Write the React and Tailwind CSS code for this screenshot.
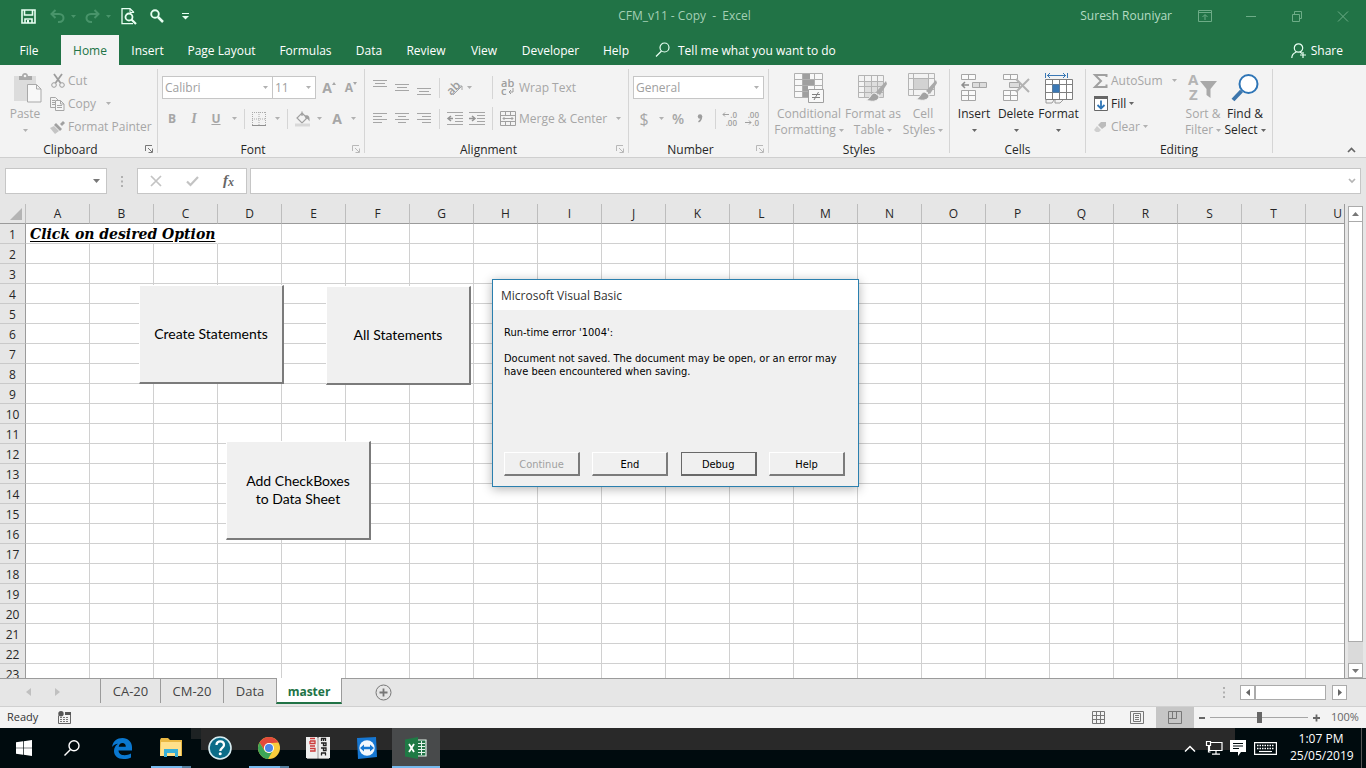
import React from "react";

const UI = "font-['Open_Sans','Noto_Sans',sans-serif]";

const Svg = ({ w, h, children, className = "", ...rest }) => (
  <svg width={w} height={h} viewBox={`0 0 ${w} ${h}`} fill="none" aria-hidden="true" className={`shrink-0 overflow-visible ${className}`} {...rest}>
    {children}
  </svg>
);

const Arrow = ({ className = "text-[#b1b1b1]" }) => (
  <Svg w={5} h={3} className={className}>
    <path d="M0 0h5L2.5 3z" fill="currentColor" />
  </Svg>
);

const Sep = ({ className = "h-[20px]" }) => <span className={`w-px shrink-0 bg-[#d5d5d5] ${className}`} />;

const IconButton = ({ label, children, className = "w-[22px]" }) => (
  <button type="button" aria-label={label} className={`flex h-[23px] shrink-0 items-center justify-center leading-4 text-[#a6a6a6] ${className}`}>
    {children}
  </button>
);

const Lines = ({ rows, h = 14 }) => (
  <Svg w={14} h={h}>
    {rows.map(([x, y, len]) => (
      <path key={y} d={`M${x} ${y + 0.5}h${len}`} stroke="#a6a6a6" />
    ))}
  </Svg>
);

function Group({ name, width, launcher, active, children }) {
  return (
    <>
      <section aria-label={name} className={`flex h-[88px] shrink-0 flex-col ${width}`}>
        <div className="h-[72px]">{children}</div>
        <div className="flex h-4 items-center">
          <h2 className="flex-1 pt-px text-center text-[12px] leading-4 text-[#262626]">{name}</h2>
          {launcher && (
            <button type="button" aria-label={`${name} settings`} className={`flex w-4 justify-center ${active ? "text-[#777]" : "text-[#b8b8b8]"}`}>
              <Svg w={8} h={8}>
                <path d="M.5 6V.5H7M3 3l4 4M7.5 3.500V7.500H3.500" stroke="currentColor" />
              </Svg>
            </button>
          )}
        </div>
      </section>
      <Sep className="h-[84px]" />
    </>
  );
}

function BigButton({ lines, width, enabled, children }) {
  return (
    <button type="button" className={`flex flex-col items-center whitespace-nowrap pt-1 text-[12px] leading-4 ${width} ${enabled ? "text-[#262626]" : "text-[#a6a6a6]"}`}>
      <span className="mb-[3px] flex h-[30px] items-center justify-center">{children}</span>
      <span>{lines[0]}</span>
      <span className="flex h-4 items-center gap-[3px]">
        {lines[1]}
        <Arrow className={enabled ? "text-[#666]" : "text-[#b1b1b1]"} />
      </span>
    </button>
  );
}

const RowButton = ({ icon, text, arrow, enabled, arrowGap = "ml-1" }) => (
  <button type="button" className={`flex h-[23px] items-center whitespace-nowrap text-[12px] leading-4 ${enabled ? "text-[#262626]" : "text-[#a6a6a6]"}`}>
    <span className="mr-[3px] flex w-[15px] justify-center">{icon}</span>
    {text}
    {arrow && (
      <span className={arrowGap}>
        <Arrow className={enabled ? "text-[#666]" : "text-[#b1b1b1]"} />
      </span>
    )}
  </button>
);

const Picker = ({ label, value, width }) => (
  <div className={`relative flex h-[23px] items-center border border-[#c6c6c6] bg-white ${width}`}>
    <select aria-label={label} className="h-full w-full appearance-none bg-transparent pl-[2px] text-[12px] leading-4 text-[#a0a0a0] outline-none">
      <option>{value}</option>
    </select>
    <span className="pointer-events-none absolute right-[4px]">
      <Arrow />
    </span>
  </div>
);

const Brush = ({ x = 0, y = 0 }) => (
  <g transform={`translate(${x} ${y})`}>
    <path d="M21 0l1 3-7 11-4-3z" fill="#a9a9a9" />
    <path d="M10 12l4 3c0 4-4 6-9 5-2 0-3-1-4-1 5-1 4-7 9-7z" fill="#a2a2a2" stroke="#f3f3f3" />
  </g>
);

const ribbonTabs = [
  ["File", "w-[58px] mr-[3px]"],
  ["Home", "w-[58px]"],
  ["Insert", "w-[57px]"],
  ["Page Layout", "w-[91px]"],
  ["Formulas", "w-[77px]"],
  ["Data", "w-[50px]"],
  ["Review", "w-[64px]"],
  ["View", "w-[52px]"],
  ["Developer", "w-[81px]"],
  ["Help", "w-[50px]"],
];

function TitleBar() {
  return (
    <header className="flex h-[35px] items-center pb-[3px] text-[12px] leading-4 text-[#a4d0b5]">
      <div className="flex flex-1 basis-0 items-center pl-[21px] text-white">
        <button type="button" aria-label="Save">
          <Svg w={15} h={15}>
            <path d="M1 1h13v13H1zM3.500 1v5h8V1M4 14v-4h7v4" stroke="#e8fff2" strokeWidth="1.6" />
            <path d="M6 11h2v3H6z" fill="#e8fff2" />
          </Svg>
        </button>
        <button type="button" aria-label="Undo" className="ml-[14px] flex items-center gap-[6px]">
          <Svg w={15} h={14}>
            <path d="M5.500 1L1.500 5l4 4M2 5h7c6 0 6 8 0 8H8" stroke="#48946a" strokeWidth="2" />
          </Svg>
          <Arrow className="text-[#48946a]" />
        </button>
        <button type="button" aria-label="Redo" className="ml-[9px] flex items-center gap-[6px]">
          <Svg w={15} h={14}>
            <path d="M9.500 1l4 4-4 4M13 5H6c-6 0-6 8 0 8h1" stroke="#48946a" strokeWidth="2" />
          </Svg>
          <Arrow className="text-[#48946a]" />
        </button>
        <button type="button" aria-label="Print preview" className="ml-[10px]">
          <Svg w={16} h={17}>
            <path d="M12.500 5V4L9 .700H1v15h11" stroke="#e8fff2" strokeWidth="1.3" />
            <path d="M9 1v3.500h3.500" stroke="#e8fff2" />
            <circle cx="8" cy="9" r="3.500" stroke="#e8fff2" strokeWidth="1.8" />
            <path d="M10.500 11.500L15 16" stroke="#e8fff2" strokeWidth="2.2" />
          </Svg>
        </button>
        <button type="button" aria-label="Find" className="ml-[13px]">
          <Svg w={14} h={14}>
            <circle cx="5" cy="5" r="3.800" stroke="#e8fff2" strokeWidth="1.9" />
            <path d="M8 8l5 5" stroke="#e8fff2" strokeWidth="2.5" />
          </Svg>
        </button>
        <button type="button" aria-label="Customize toolbar" className="ml-[18px]">
          <Svg w={7} h={7}>
            <path d="M0 .5h7" stroke="#e8fff2" />
            <path d="M0 3h7L3.500 6.500z" fill="#e8fff2" />
          </Svg>
        </button>
      </div>
      <h1 className="whitespace-pre">CFM_v11 - Copy  -  Excel</h1>
      <div className="flex flex-1 basis-0 items-center justify-end pr-[18px] text-[#6dac87]">
        <span className="mr-[26px] text-[#b4dcc3]">Suresh Rouniyar</span>
        <button type="button" aria-label="Ribbon display options">
          <Svg w={14} h={12}>
            <path d="M.5.500h13v11H.5zM.5 2.500h13M7 10V5M4.500 7L7 4.500 9.500 7" stroke="currentColor" />
          </Svg>
        </button>
        <button type="button" aria-label="Minimize" className="ml-[34px]">
          <Svg w={10} h={11}><path d="M0 5.500h10" stroke="currentColor" /></Svg>
        </button>
        <button type="button" aria-label="Restore" className="ml-[36px]">
          <Svg w={10} h={11}><path d="M.5 3.500h7v7h-7zM2.500 3V.500h7v7H8" stroke="currentColor" /></Svg>
        </button>
        <button type="button" aria-label="Close" className="ml-[36px]">
          <Svg w={10} h={11}><path d="M0 .500l10 10M10 .500L0 10.500" stroke="currentColor" /></Svg>
        </button>
      </div>
    </header>
  );
}

function RibbonTabs() {
  return (
    <nav aria-label="Ribbon" className="flex h-[30px] items-stretch whitespace-nowrap text-[12px] leading-4 text-white">
      {ribbonTabs.map(([name, width]) => (
        <button key={name} type="button" className={`shrink-0 pt-px ${width} ${name === "Home" ? "bg-[#f3f3f3] text-[#217346]" : ""}`}>
          {name}
        </button>
      ))}
      <button type="button" className="ml-[14px] flex items-center gap-2 pt-px">
        <Svg w={15} h={15} className="-mt-[2px]">
          <circle cx="9.500" cy="5.500" r="4.500" stroke="#e8fff2" strokeWidth="1.2" />
          <path d="M6.500 9L1 14.500" stroke="#e8fff2" strokeWidth="1.300" />
        </Svg>
        Tell me what you want to do
      </button>
      <button type="button" className="ml-auto mr-[23px] flex items-center gap-1 pt-px">
        <Svg w={16} h={16}>
          <circle cx="7.500" cy="5" r="4.200" stroke="#e8fff2" strokeWidth="1.200" />
          <path d="M.800 15c0-3 2-5 4.500-6M9 9l2 1.500M12 9v6M9 12h6" stroke="#e8fff2" strokeWidth="1.200" />
        </Svg>
        Share
      </button>
    </nav>
  );
}

function ClipboardGroup() {
  return (
    <Group name="Clipboard" width="w-[157px]" launcher active>
      <div className="flex">
        <BigButton lines={["Paste", ""]} width="w-[50px]">
          <Svg w={29} h={30} className="ml-1">
            <path d="M1 3h22v25H1z" fill="#dcdcdc" />
            <path d="M6 7V3h3c0-4 6-4 6 0h4v4z" fill="#a9a9a9" />
            <circle cx="12" cy="3" r="1.300" fill="#f3f3f3" />
            <path d="M14.500 11.500h9l4.500 4.500v13H14.500zM23.500 11.500V16H28" fill="#f8f8f8" stroke="#a9a9a9" />
          </Svg>
        </BigButton>
        <div className="flex flex-col">
          <RowButton
            text="Cut"
            icon={
              <Svg w={14} h={15}>
                <path d="M3 1l6.500 9M11 1L4.500 10" stroke="#9d9d9d" strokeWidth="1.800" />
                <circle cx="3" cy="12" r="2.300" stroke="#9d9d9d" />
                <circle cx="11" cy="12" r="2.300" stroke="#9d9d9d" />
              </Svg>
            }
          />
          <RowButton
            text="Copy"
            arrow
            arrowGap="ml-[10px]"
            icon={
              <Svg w={15} h={14}>
                <path d="M5 10.500H.500V.500h5L8 3M2 3.500h3M2 5.500h3M2 7.500h3" stroke="#a6a6a6" />
                <path d="M5.500 3.500h5L14 7v6.500H5.500zM10.500 3.500V7H14M7 8.500h5M7 10.500h5" fill="#f6f6f6" stroke="#a6a6a6" />
              </Svg>
            }
          />
          <RowButton
            text="Format Painter"
            icon={
              <Svg w={15} h={14}>
                <path d="M10 4l3-3 2 2-3 3z" fill="#a0a0a0" />
                <path d="M6 3l6 6-2 2-6-6z" fill="#a0a0a0" />
                <path d="M4 6l5 5-4 3L0 8z" fill="#c4c4c4" />
              </Svg>
            }
          />
        </div>
      </div>
    </Group>
  );
}

function FontGroup() {
  return (
    <Group name="Font" width="w-[206px]" launcher>
      <div className="flex flex-col gap-2 pl-[3px] pt-[7px]">
        <div className="flex pl-px">
          <Picker label="Font" value="Calibri" width="w-[111px]" />
          <Picker label="Font size" value="11" width="-ml-px w-[44px]" />
          <IconButton label="Increase font size" className="ml-[2px] w-[22px] font-bold text-[14px]">
            A<Svg w={4} h={3} className="mb-[9px]"><path d="M0 3L2 0l2 3z" fill="#a6a6a6" /></Svg>
          </IconButton>
          <IconButton label="Decrease font size" className="w-[22px] font-bold text-[12px]">
            A<Svg w={4} h={3} className="mb-[9px]"><path d="M0 0h4L2 3z" fill="#a6a6a6" /></Svg>
          </IconButton>
        </div>
        <div className="flex items-center">
          <IconButton label="Bold"><b className="text-[12px]">B</b></IconButton>
          <IconButton label="Italic"><i className="font-['Liberation_Serif',serif] text-[14px] font-bold">I</i></IconButton>
          <IconButton label="Underline"><u className="text-[12px] font-bold">U</u></IconButton>
          <IconButton label="Underline styles" className="w-[14px]"><Arrow /></IconButton>
          <Sep className="ml-[3px] h-[20px]" />
          <IconButton label="Borders" className="ml-[3px] w-[22px]">
            <Svg w={14} h={14}>
              <path d="M.5 0v14M13.500 0v14M7 0v14M0 .500h14M0 7h14" stroke="#ababab" strokeDasharray="1 1" />
              <path d="M0 13.500h14" stroke="#8f8f8f" />
            </Svg>
          </IconButton>
          <IconButton label="Border styles" className="w-[14px]"><Arrow /></IconButton>
          <Sep className="ml-[3px] h-[20px]" />
          <IconButton label="Fill color" className="ml-1 w-[22px]">
            <Svg w={16} h={16}>
              <path d="M7 2l5 5-5 5-5-5zM7 5V.500" stroke="#a0a0a0" strokeWidth="1.200" />
              <path d="M10 4.500c4-1 5 2 4.500 6-2-3-2-3-4-3z" fill="#a0a0a0" />
              <path d="M0 12.500h15v3H0z" fill="#d8d8d8" />
            </Svg>
          </IconButton>
          <IconButton label="Fill colors" className="w-[10px]"><Arrow /></IconButton>
          <IconButton label="Font color" className="ml-[2px] w-[22px]"><b className="text-[14px]">A</b></IconButton>
          <IconButton label="Font colors" className="w-[10px]"><Arrow /></IconButton>
        </div>
      </div>
    </Group>
  );
}

const Indent = ({ flip }) => (
  <Svg w={16} h={14}>
    <path d="M0 .500h16M8 3.500h8M8 6.500h8M8 9.500h8M0 12.500h16" stroke="#a6a6a6" />
    <path d={flip ? "M0 6.500h5M3 4l3 2.500L3 9" : "M6 6.500H1M4 4L1 6.500 4 9"} stroke="#949494" strokeWidth="1.500" />
  </Svg>
);

function AlignmentGroup() {
  return (
    <Group name="Alignment" width="w-[263px]" launcher>
      <div className="flex flex-col gap-2 pl-1 pt-[7px]">
        <div className="flex items-center">
          <IconButton label="Top align"><Lines rows={[[0, 0, 14], [2, 3, 10], [0, 6, 14]]} h={16} /></IconButton>
          <IconButton label="Middle align"><Lines rows={[[0, 4, 14], [2, 7, 10], [0, 10, 14]]} h={16} /></IconButton>
          <IconButton label="Bottom align"><Lines rows={[[0, 8, 14], [2, 11, 10], [0, 14, 14]]} h={16} /></IconButton>
          <Sep className="ml-1 h-[20px]" />
          <IconButton label="Orientation" className="ml-1 w-[22px]">
            <Svg w={17} h={16}>
              <text x="0" y="12" fontSize="12" fontWeight="600" fill="#9d9d9d" fontFamily="Open Sans" transform="rotate(-45 7 9)">ab</text>
              <path d="M6 15l9-9M11 6h4v4" stroke="#a6a6a6" />
            </Svg>
          </IconButton>
          <IconButton label="Orientation options" className="w-[6px]"><Arrow /></IconButton>
          <Sep className="ml-[20px] h-[23px]" />
          <button type="button" className="ml-[7px] flex items-center gap-[3px] text-[12px] leading-4 text-[#a6a6a6]">
            <Svg w={16} h={17}>
              <text x="1" y="8" fontSize="11" fontWeight="600" fill="#9d9d9d" fontFamily="Open Sans">ab</text>
              <text x="1" y="16" fontSize="11" fontWeight="600" fill="#9d9d9d" fontFamily="Open Sans">c</text>
              <path d="M13 9v4H9M11 11l-2 2 2 2" stroke="#9d9d9d" />
            </Svg>
            Wrap Text
          </button>
        </div>
        <div className="flex items-center">
          <IconButton label="Align left"><Lines rows={[[0, 1, 14], [0, 4, 9], [0, 7, 14], [0, 10, 9]]} /></IconButton>
          <IconButton label="Center"><Lines rows={[[0, 1, 14], [3, 4, 8], [0, 7, 14], [3, 10, 8]]} /></IconButton>
          <IconButton label="Align right"><Lines rows={[[0, 1, 14], [5, 4, 9], [0, 7, 14], [5, 10, 9]]} /></IconButton>
          <Sep className="ml-1 h-[20px]" />
          <IconButton label="Decrease indent" className="ml-1 w-[22px]"><Indent /></IconButton>
          <IconButton label="Increase indent"><Indent flip /></IconButton>
          <Sep className="ml-1 h-[23px]" />
          <button type="button" className="ml-[7px] flex items-center gap-[3px] whitespace-nowrap text-[12px] leading-4 text-[#a6a6a6]">
            <Svg w={16} h={15}>
              <path d="M.5.500h15v14H.5zM.5 4.500h15M.5 10.500h15M5.500.500v4M10.500.500v4M5.500 10.500v4M10.500 10.500v4M3 7.500h10M4.500 6L3 7.500 4.500 9M11.500 6L13 7.500 11.500 9" stroke="#a0a0a0" />
            </Svg>
            Merge &amp; Center
            <span className="ml-[6px]"><Arrow /></span>
          </button>
        </div>
      </div>
    </Group>
  );
}

const Decimals = ({ top, bottom, arrow }) => (
  <Svg w={16} h={15}>
    <text x={15} y="7" textAnchor="end" fontSize="8" fontWeight="600" fill="#a0a0a0" fontFamily="Open Sans">{top}</text>
    <text x={15} y="15" textAnchor="end" fontSize="8" fontWeight="600" fill="#a0a0a0" fontFamily="Open Sans">{bottom}</text>
    <path d={arrow} stroke="#a0a0a0" />
  </Svg>
);

function NumberGroup() {
  return (
    <Group name="Number" width="w-[139px]" launcher>
      <div className="flex flex-col gap-2 pl-[4px] pt-[7px]">
        <div className="flex"><Picker label="Number format" value="General" width="w-[131px]" /></div>
        <div className="flex items-center">
          <IconButton label="Accounting format"><span className="text-[16px]">$</span></IconButton>
          <IconButton label="Accounting formats" className="w-[12px]"><Arrow /></IconButton>
          <IconButton label="Percent style"><span className="text-[14px] font-semibold">%</span></IconButton>
          <IconButton label="Comma style">
            <Svg w={6} h={9}><circle cx="3" cy="2.500" r="2.200" fill="#9d9d9d" /><path d="M4.500 2.500c0 3-1.500 4.500-3 5.500" stroke="#9d9d9d" strokeWidth="1.500" /></Svg>
          </IconButton>
          <Sep className="ml-1 h-[20px]" />
          <IconButton label="Increase decimal" className="ml-[3px] w-[22px]">
            <Decimals top=".0" bottom=".00" arrow="M7 3.500H1M3 1.500l-2 2 2 2" />
          </IconButton>
          <IconButton label="Decrease decimal">
            <Decimals top=".00" bottom=".0" arrow="M1 11.500h6M5 9.500l2 2-2 2" />
          </IconButton>
        </div>
      </div>
    </Group>
  );
}

function StylesGroup() {
  return (
    <Group name="Styles" width="w-[180px]">
      <div className="flex pl-1">
        <BigButton lines={["Conditional", "Formatting"]} width="w-[72px]">
          <Svg w={30} h={30}>
            <path d="M.5.500h28v24H.5zM.5 6.500h28M.5 12.500h28M.5 18.500h28M8.500.500v24M20.500.500v24" fill="#f8f8f8" stroke="#b0b0b0" />
            <path d="M9 1h7v5H9zM9 7h11v5H9zM9 13h5v5H9zM9 19h7v5H9z" fill="#9f9f9f" />
            <path d="M14.500 16.500h15v13h-15z" fill="#f8f8f8" stroke="#a0a0a0" />
            <path d="M18 21.500h8M18 24.500h8M24.500 19l-4.500 8" stroke="#808080" />
          </Svg>
        </BigButton>
        <BigButton lines={["Format as", "Table"]} width="w-[56px]">
          <Svg w={30} h={30}>
            <path d="M7 8h18v16H7z" fill="#dedede" />
            <path d="M.5 2.500h25v22H.5zM.5 8.500h25M.5 13.500h25M.5 19.500h25M6.500 2.500v22M13.500 2.500v22M19.500 2.500v22" stroke="#b4b4b4" />
            <Brush x={7} y={8} />
          </Svg>
        </BigButton>
        <BigButton lines={["Cell", "Styles"]} width="w-[44px]">
          <Svg w={30} h={30}>
            <path d="M.5.500h26v22H.5zM.5 5.500h26M.5 16.500h26M5.500.500v22M20.500.500v22" stroke="#b4b4b4" />
            <path d="M6 6h14v10H6z" fill="#d2d2d2" />
            <Brush x={7} y={7} />
          </Svg>
        </BigButton>
      </div>
    </Group>
  );
}

function CellsGroup() {
  return (
    <Group name="Cells" width="w-[135px]">
      <div className="flex pl-[3px]">
        <BigButton lines={["Insert", ""]} width="w-[42px]" enabled>
          <Svg w={28} h={30}>
            <path d="M1.500 1.500h14v5h-14zM8.500 1.500v5M1.500 17.500h14v10h-14zM8.500 17.500v10M1.500 22.500h14" fill="#fafafa" stroke="#a6a6a6" />
            <path d="M12.500 9.500h14v5h-14zM19.500 9.500v5" fill="#dcdcdc" stroke="#a6a6a6" />
            <path d="M9 12H2M5 9l-3 3 3 3" stroke="#8d8d8d" strokeWidth="1.500" />
          </Svg>
        </BigButton>
        <BigButton lines={["Delete", ""]} width="w-[42px]" enabled>
          <Svg w={28} h={30}>
            <path d="M1.500 1.500h14v5h-14zM8.500 1.500v5M1.500 17.500h14v10h-14zM8.500 17.500v10M1.500 22.500h14" fill="#fafafa" stroke="#a6a6a6" />
            <path d="M7.500 9.500h10v5h-10z" fill="#dcdcdc" stroke="#a6a6a6" />
            <path d="M14 6l13 13M27 6L14 19" stroke="#b2b2b2" strokeWidth="2" />
          </Svg>
        </BigButton>
        <BigButton lines={["Format", ""]} width="w-[43px]" enabled>
          <Svg w={28} h={31}>
            <path d="M.5 6.500h27v20H.5zM.5 11.500h27M.5 19.500h27M7.500 6.500v20M14.500 6.500v20M21.500 6.500v20" fill="#fff" stroke="#7f7f7f" />
            <path d="M7.500 11.500h7v8h-7z" fill="#3a78b5" />
            <path d="M1 27v3h6l2-3M10 27v3h5l3-3" stroke="#9a9a9a" />
            <path d="M.5 0v5M22.500 0v5M2 2.500h19M5 0L2.500 2.500 5 5M18 0l2.500 2.500L18 5" stroke="#3a78b5" />
          </Svg>
        </BigButton>
      </div>
    </Group>
  );
}

function EditingGroup() {
  return (
    <Group name="Editing" width="w-[186px]">
      <div className="flex pl-[7px]">
        <div className="flex w-[89px] flex-col">
          <RowButton
            text="AutoSum"
            arrow
            arrowGap="ml-[9px]"
            icon={<Svg w={15} h={14}><path d="M13.500 3V1H2l6 6-6 6h11.500v-2.500" stroke="#a0a0a0" strokeWidth="2" /></Svg>}
          />
          <RowButton
            text="Fill"
            arrow
            enabled
            arrowGap="ml-[3px]"
            icon={
              <Svg w={14} h={15}>
                <path d="M.5 1.500h13v13H.5z" fill="#fff" stroke="#666" />
                <path d="M0 0h14v3H0z" fill="#666" />
                <path d="M7 4.500v8M3.500 9L7 12.500 10.500 9" stroke="#2e75b6" strokeWidth="1.800" />
              </Svg>
            }
          />
          <RowButton
            text="Clear"
            arrow
            arrowGap="ml-[3px]"
            icon={<Svg w={13} h={12}><path d="M7 1h5v4L8 8 4 4z" fill="#bcbcbc" /><path d="M3 5l4 4-2 2H2L0 9z" fill="#cfcfcf" /></Svg>}
          />
        </div>
        <BigButton lines={["Sort &", "Filter"]} width="w-[42px]">
          <Svg w={30} h={30}>
            <text x="0" y="12" fontSize="15" fontWeight="700" fill="#b4b4b4" fontFamily="Open Sans">A</text>
            <text x="1" y="27" fontSize="15" fontWeight="700" fill="#b4b4b4" fontFamily="Open Sans">Z</text>
            <path d="M12 8h17l-6.500 8v9l-4-3v-6z" fill="#a9a9a9" />
          </Svg>
        </BigButton>
        <BigButton lines={["Find &", "Select"]} width="w-[42px]" enabled>
          <Svg w={28} h={28}>
            <circle cx="17.500" cy="10" r="9" fill="#fff" stroke="#2e75b6" strokeWidth="2" />
            <path d="M10.500 17L2 26" stroke="#3d76ac" strokeWidth="4" />
          </Svg>
        </BigButton>
      </div>
    </Group>
  );
}

function Ribbon() {
  return (
    <div className="flex h-[93px] items-start border-b border-[#cfcfcf] bg-[#f3f3f3] pt-1">
      <ClipboardGroup />
      <FontGroup />
      <AlignmentGroup />
      <NumberGroup />
      <StylesGroup />
      <CellsGroup />
      <EditingGroup />
      <button type="button" aria-label="Collapse the ribbon" className="mb-1 ml-auto mr-[10px] self-end">
        <Svg w={9} h={6}><path d="M1 5l3.500-3.500L8 5" stroke="#666" strokeWidth="1.700" /></Svg>
      </button>
    </div>
  );
}

const Dots = () => (
  <Svg w={2} h={11}><path d="M0 0h2v2H0zM0 4.500h2v2H0zM0 9h2v2H0z" fill="#b0b0b0" /></Svg>
);

function FormulaBar() {
  return (
    <div className="flex h-[46px] items-start bg-[#e6e6e6] pl-[5px] pr-[5px] pt-[10px]">
      <div className="flex h-[26px] w-[102px] items-center border border-[#c6c6c6] bg-white pr-[6px]">
        <input aria-label="Name box" className="h-full w-full min-w-0 bg-transparent px-1 text-[12px] outline-none" />
        <button type="button" aria-label="Open name list"><Svg w={7} h={4}><path d="M0 0h7L3.500 4z" fill="#777" /></Svg></button>
      </div>
      <span className="flex h-[26px] w-[30px] items-center justify-center"><Dots /></span>
      <div className="flex h-[26px] w-[110px] items-center border border-[#c6c6c6] bg-white pl-[12px]">
        <button type="button" aria-label="Cancel"><Svg w={12} h={12}><path d="M1 1l10 10M11 1L1 11" stroke="#c3c3c3" strokeWidth="1.700" /></Svg></button>
        <button type="button" aria-label="Enter" className="ml-6"><Svg w={13} h={12}><path d="M1 6.500L4.500 10 12 2" stroke="#c3c3c3" strokeWidth="2.200" /></Svg></button>
        <button type="button" aria-label="Insert function" className="ml-6 flex items-end pb-[2px] font-['Liberation_Serif',serif] text-[15px] italic font-bold leading-4 text-[#666]">
          f<span className="text-[12px] leading-3">x</span>
        </button>
      </div>
      <div className="ml-[3px] flex h-[26px] flex-1 items-center border border-[#c6c6c6] bg-white pr-1">
        <input aria-label="Formula bar" className="h-full w-full min-w-0 bg-transparent px-1 text-[12px] outline-none" />
        <button type="button" aria-label="Expand formula bar"><Svg w={8} h={6}><path d="M1 1l3 3 3-3" stroke="#b5b5b5" strokeWidth="1.700" /></Svg></button>
      </div>
    </div>
  );
}

const columns = "ABCDEFGHIJKLMNOPQRSTU".split("");
const rows = Array.from({ length: 23 }, (_, i) => i + 1);

const SheetButton = ({ place, children }) => (
  <button type="button" className={`absolute h-[99px] w-[145px] border-b-2 border-l border-r-2 border-t border-b-[#7b7b7b] border-l-white border-r-[#7b7b7b] border-t-white bg-[#f0f0f0] font-[Lato,'Open_Sans',sans-serif] text-[14px] leading-[18px] text-black ${place}`}>
    {children}
  </button>
);

function Sheet() {
  return (
    <div className="relative min-w-0 flex-1 overflow-hidden border-r border-[#9b9b9b]">
      <table className="w-[1370px] table-fixed border-separate border-spacing-0 bg-white">
        <thead>
          <tr className="h-[20px] bg-[#e6e6e6]">
            <th aria-label="Select all" className="w-[26px] border-b border-r border-[#9b9b9b] border-r-[#bdbdbd] p-0">
              <Svg w={12} h={12} className="ml-auto mr-[3px]"><path d="M12 0v12H0z" fill="#b4b4b4" /></Svg>
            </th>
            {columns.map((c) => (
              <th key={c} scope="col" className="w-[64px] border-b border-r border-[#9b9b9b] border-r-[#bdbdbd] p-0 text-[12px] font-normal leading-[19px] text-[#262626]">{c}</th>
            ))}
          </tr>
        </thead>
        <tbody>
          {rows.map((r) => (
            <tr key={r} className="h-[20px]">
              <th scope="row" className="border-b border-r border-[#9b9b9b] border-b-[#c9c9c9] bg-[#e6e6e6] p-0 pt-[2px] text-[12px] font-normal leading-[17px] text-[#262626]">{r}</th>
              {r === 1 && (
                <td colSpan={3} className="border-b border-r border-b-[#d0d0d0] border-r-white p-0 pl-[4px] pt-[2px] font-['DejaVu_Serif',serif] text-[14px] font-bold italic leading-[17px] text-black underline underline-offset-2">
                  Click on desired Option
                </td>
              )}
              {columns.slice(r === 1 ? 3 : 0).map((c) => (
                <td key={c} className="border-b border-r border-[#d0d0d0] p-0" />
              ))}
            </tr>
          ))}
        </tbody>
      </table>
      <SheetButton place="left-[139px] top-[81px]">Create Statements</SheetButton>
      <SheetButton place="left-[326px] top-[82px]">All Statements</SheetButton>
      <SheetButton place="left-[226px] top-[237px]">Add CheckBoxes<br />to Data Sheet</SheetButton>
    </div>
  );
}

function VerticalScroll() {
  return (
    <div className="mx-[3px] mt-[2px] flex w-[15px] flex-col bg-[#dadada]">
      <button type="button" aria-label="Scroll up" className="flex h-[16px] items-center justify-center border border-[#ababab] bg-white">
        <Svg w={7} h={4}><path d="M0 4h7L3.500 0z" fill="#777" /></Svg>
      </button>
      <span className="-mt-px flex-[423] border border-[#ababab] bg-white" />
      <span className="flex-[21]" />
      <button type="button" aria-label="Scroll down" className="flex h-[15px] items-center justify-center border border-[#ababab] bg-white">
        <Svg w={7} h={4}><path d="M0 0h7L3.500 4z" fill="#777" /></Svg>
      </button>
    </div>
  );
}

const DialogButton = ({ children, kind }) => (
  <button
    type="button"
    disabled={kind === "disabled"}
    className={
      "h-[24px] w-[76px] border border-b-2 border-r-2 bg-[#f0f0f0] pt-px text-[11px] leading-[13px] " +
      (kind === "default"
        ? "border-[#696969] text-black"
        : "border-l-white border-t-white border-b-[#7b7b7b] border-r-[#7b7b7b] " + (kind === "disabled" ? "text-[#a0a0a0]" : "text-black"))
    }
  >
    {children}
  </button>
);

function ErrorDialog() {
  return (
    <div role="dialog" aria-labelledby="dialog-title" className="absolute left-[492px] top-[75px] flex h-[208px] w-[367px] flex-col border border-[#2a7fae] bg-[#f0f0f0] shadow-[0_2px_10px_rgba(0,0,0,0.3)]">
      <h2 id="dialog-title" className="bg-white pl-2 pt-[2px] text-[12px] leading-[28px] text-[#333]">Microsoft Visual Basic</h2>
      <div className="flex flex-1 flex-col px-[11px] pb-[10px] pt-[16px] font-['DejaVu_Sans_Condensed','DejaVu_Sans',sans-serif] text-[11px] leading-[13px] text-black">
        <p>Run-time error '1004':</p>
        <p className="mt-[13px] whitespace-nowrap">Document not saved. The document may be open, or an error may<br />have been encountered when saving.</p>
        <div className="mt-auto flex justify-between pr-[2px]">
          <DialogButton kind="disabled">Continue</DialogButton>
          <DialogButton>End</DialogButton>
          <DialogButton kind="default">Debug</DialogButton>
          <DialogButton>Help</DialogButton>
        </div>
      </div>
    </div>
  );
}

function SheetTabs() {
  const tab = "flex h-[24px] items-center justify-center border-l border-[#9b9b9b] text-[13px] leading-4 text-[#444]";
  return (
    <div className="flex h-[28px] items-start border-t border-[#9b9b9b] bg-[#e6e6e6]">
      <button type="button" aria-label="Previous sheet" className="ml-[26px] mt-[9px]"><Svg w={5} h={8}><path d="M5 0v8L0 4z" fill="#c0c0c0" /></Svg></button>
      <button type="button" aria-label="Next sheet" className="ml-6 mt-[9px]"><Svg w={5} h={8}><path d="M0 0v8l5-4z" fill="#c0c0c0" /></Svg></button>
      <div className="ml-[40px] flex">
        <button type="button" className={`${tab} w-[60px]`}>CA-20</button>
        <button type="button" className={`${tab} w-[63px]`}>CM-20</button>
        <button type="button" className={`${tab} w-[53px]`}>Data</button>
        <button type="button" className="-mt-px h-[26px] w-[66px] border-x border-b-2 border-[#9b9b9b] border-b-[#217346] bg-white pt-[3px] text-[12px] font-bold leading-4 text-[#217346]">master</button>
      </div>
      <button type="button" aria-label="New sheet" className="ml-[33px] mt-[5px]">
        <Svg w={17} h={17}><circle cx="8.500" cy="8.500" r="7.500" stroke="#777" /><path d="M8.500 4.500v8M4.500 8.500h8" stroke="#777" strokeWidth="1.800" /></Svg>
      </button>
      <div className="ml-auto mr-[19px] mt-[6px] flex h-[15px] items-center">
        <Dots />
        <button type="button" aria-label="Scroll left" className="ml-[15px] flex h-full w-[15px] items-center justify-center border border-[#ababab] bg-white">
          <Svg w={4} h={7}><path d="M4 0v7L0 3.500z" fill="#666" /></Svg>
        </button>
        <span className="h-full w-[71px] border border-[#ababab] bg-white" />
        <button type="button" aria-label="Scroll right" className="ml-[6px] flex h-full w-[15px] items-center justify-center border border-[#ababab] bg-white">
          <Svg w={4} h={7}><path d="M0 0v7l4-3.500z" fill="#666" /></Svg>
        </button>
      </div>
    </div>
  );
}

function StatusBar() {
  return (
    <div className="flex h-[22px] items-center border-t border-[#d0d0d0] bg-[#f3f3f3] pl-[7px] pr-[7px] text-[11px] leading-4 text-[#333]">
      <span className="w-[51px] pb-px">Ready</span>
      <button type="button" aria-label="Record macro">
        <Svg w={14} h={13}>
          <path d="M.5 4.500v8h12v-11H7" stroke="#666" />
          <path d="M7 1h6v3H7z" fill="#555" />
          <circle cx="3" cy="2.800" r="2.700" fill="#555" />
          <path d="M2 6.500h9M2 8.500h9M2 10.500h9" stroke="#777" strokeDasharray="2 1" />
        </Svg>
      </button>
      <div className="ml-auto flex h-full items-center text-[#666]">
        <button type="button" aria-label="Normal view" className="flex w-[38px] justify-center">
          <Svg w={13} h={13}><path d="M.5.500h12v12H.5zM.5 4.500h12M.5 8.500h12M4.500.500v12M8.500.500v12" stroke="#777" /></Svg>
        </button>
        <button type="button" aria-label="Page layout view" className="flex w-[39px] justify-center">
          <Svg w={14} h={13}><path d="M.5.500h13v12H.5zM3.500 2.500h7v8h-7zM5 4.500h4M5 6.500h4M5 8.500h4" stroke="#777" /></Svg>
        </button>
        <button type="button" aria-label="Page break preview" className="flex h-full w-[38px] items-center justify-center bg-[#c6c6c6]">
          <Svg w={14} h={13}><path d="M.5.500h13v12H.5zM.5 7.500h8v-7M4.500.500v7" stroke="#777" /></Svg>
        </button>
        <button type="button" aria-label="Zoom out" className="ml-[5px]"><Svg w={6} h={8}><path d="M0 4h6" stroke="#666" strokeWidth="2" /></Svg></button>
        <input
          type="range"
          aria-label="Zoom"
          min="0"
          max="100"
          defaultValue="50"
          className="ml-[5px] h-[12px] w-[98px] appearance-none bg-transparent [&::-webkit-slider-runnable-track]:h-px [&::-webkit-slider-runnable-track]:bg-[#a6a6a6] [&::-webkit-slider-thumb]:-mt-[5px] [&::-webkit-slider-thumb]:h-[11px] [&::-webkit-slider-thumb]:w-[5px] [&::-webkit-slider-thumb]:appearance-none [&::-webkit-slider-thumb]:bg-[#666]"
        />
        <button type="button" aria-label="Zoom in" className="ml-[5px]"><Svg w={7} h={8}><path d="M0 4h7M3.500.500v7" stroke="#666" strokeWidth="1.800" /></Svg></button>
        <span className="ml-[11px] w-[28px] pb-px">100%</span>
      </div>
    </div>
  );
}

const TaskButton = ({ label, running, className = "", children }) => (
  <button type="button" aria-label={label} className={`relative flex h-full w-[48px] items-center justify-center ${className}`}>
    {children}
    {running && (
      <span className="absolute bottom-0 left-1 flex h-[2px]">
        <span className="w-[31px] bg-[#76b9ed]" />
        <span className="w-[9px] bg-[#557f9f]" />
      </span>
    )}
  </button>
);

function Taskbar() {
  return (
    <footer className="relative flex h-[40px] bg-[#000b0e] text-white">
      <div className="absolute left-[201px] right-[131px] top-0 h-[22px] bg-[#292929]" />
      <div className="absolute left-[191px] top-0 h-[11px] w-[10px] bg-[#1d2223]" />
      <div className="relative flex h-full">
        <TaskButton label="Start">
          <Svg w={16} h={16}><path d="M0 2.300l7-1v6.400H0zM7.700 1.200L16 0v7.700H7.700zM0 8.300h7v6.400l-7-1zM7.700 8.300H16V16l-8.300-1.200z" fill="#fff" /></Svg>
        </TaskButton>
        <TaskButton label="Search">
          <Svg w={16} h={16}><circle cx="10" cy="5.800" r="5" stroke="#fff" strokeWidth="1.400" /><path d="M6.500 9.500L.500 15.500" stroke="#fff" strokeWidth="1.500" /></Svg>
        </TaskButton>
        <div className="ml-[2px] flex gap-px">
          <TaskButton label="Edge">
            <Svg w={20} h={21}>
              <path d="M0 9C1 3 5 0 10.500 0 16 0 20 4 20 9v3.500H6.500c.2 3 2.500 4.700 6 4.700 2.500 0 4.500-.6 6.500-1.700v4c-2 1-4.500 1.500-7.500 1.500C5.500 21 2 17.500 2 13c0-3 1.700-5.700 4-7.200C3.500 6 1.500 7 0 9zM6.700 8.700h7.100c0-2.500-1.300-3.700-3.400-3.700-2 0-3.300 1.500-3.700 3.700z" fill="#0a78d0" />
            </Svg>
          </TaskButton>
          <TaskButton label="File Explorer" running>
            <Svg w={22} h={20}>
              <path d="M0 2l1-2h7l2 2h12v16H0z" fill="#e9b843" />
              <path d="M1 4h20v14H0z" fill="#ffe08a" />
              <path d="M4 11h14v8h-3v-4H7v4H4z" fill="#38b0d8" />
            </Svg>
          </TaskButton>
          <TaskButton label="Help">
            <Svg w={24} h={24}>
              <circle cx="12" cy="12" r="11" fill="#0b6c88" stroke="#d8edf2" strokeWidth="1.600" />
              <path d="M8.500 9c0-5 7.500-4.500 7.500 0 0 2.700-3.700 3-3.700 6" stroke="#fff" strokeWidth="2.300" />
              <circle cx="12.200" cy="17.800" r="1.500" fill="#fff" />
            </Svg>
          </TaskButton>
          <TaskButton label="Chrome" running>
            <Svg w={22} h={22}>
              <circle cx="11" cy="11" r="11" fill="#f8cc3c" />
              <path d="M1.500 5.500A11 11 0 0 1 20.500 5.500L11 6.200a5 5 0 0 0-4.500 7z" fill="#e24a3b" />
              <path d="M1.500 5.500A11 11 0 0 0 10 22l5-8.500a5 5 0 0 1-8.500 0z" fill="#3da557" />
              <circle cx="11" cy="11" r="5" fill="#fff" />
              <circle cx="11" cy="11" r="4" fill="#4a86e8" />
            </Svg>
          </TaskButton>
          <TaskButton label="Dictionary">
            <Svg w={24} h={24}>
              <path d="M0 1h11l1 1 1-1h11v21H13l-1 1-1-1H0z" fill="#efefef" />
              <path d="M12 2v20M1 22.500h10M13 22.500h10" stroke="#999" />
              <path d="M4 2.500h5M4 5v2.500h5V5H4M4 10h5M4 12.500h5V15H4" stroke="#cc3a3a" strokeWidth="1.300" />
              <path d="M15.500 5V2.500h4V5M17.500 2.500V5M15 7h5v2.500h-2.500V7M15 12h5v2.500h-2.500V12M15 17h5M15.500 17v2.500M19.500 17v2.500" stroke="#222" strokeWidth="1.300" />
            </Svg>
          </TaskButton>
          <TaskButton label="TeamViewer">
            <Svg w={20} h={22}>
              <path d="M0 1l19-1 1 20-19 2z" fill="#1677d2" />
              <circle cx="10" cy="11" r="7.700" fill="#f3f8fd" />
              <path d="M3 11l4-3.500v2.300h6V7.500l4 3.500-4 3.500v-2.300H7v2.300z" fill="#1677d2" />
            </Svg>
          </TaskButton>
          <TaskButton label="Excel" className="border-b-2 border-[#76b9ed] bg-[#484a4b] pt-[2px]">
            <Svg w={22} h={22}>
              <path d="M12 3h9v16h-9z" fill="#217346" stroke="#e6f4ec" strokeWidth="1.200" />
              <path d="M13 6.500h7M13 9.500h7M13 12.500h7M13 15.500h7M16.500 4v14" stroke="#e6f4ec" />
              <path d="M0 2.500L13 0v22L0 19.500z" fill="#1f7a45" />
              <path d="M4 7l5 8M9 7l-5 8" stroke="#fff" strokeWidth="1.800" />
            </Svg>
          </TaskButton>
        </div>
      </div>
      <div className="relative ml-auto flex h-full items-center">
        <button type="button" aria-label="Show hidden icons"><Svg w={12} h={7}><path d="M1 6.500l5-5 5 5" stroke="#fff" strokeWidth="1.500" /></Svg></button>
        <button type="button" aria-label="Network" className="ml-[10px]">
          <Svg w={17} h={14}><path d="M4 1.500h12v8H3.500V5M.5.500h4v4h-4zM2.500 5v6h2M10 10v3M6 13.200h8" stroke="#fff" strokeWidth="1.200" /></Svg>
        </button>
        <button type="button" aria-label="Notifications" className="ml-[7px]">
          <Svg w={16} h={16}><path d="M0 0h16v12h-5l-3 4v-4H0z" fill="#fff" /><path d="M3 3.500h10M3 6h10M3 8.500h6" stroke="#000b0e" /></Svg>
        </button>
        <button type="button" aria-label="Keyboard" className="ml-2">
          <Svg w={23} h={13}><path d="M.6.600h21.800v11.800H.6z" stroke="#fff" strokeWidth="1.200" /><path d="M3 3.500h17M3 6.500h17" stroke="#fff" strokeWidth="1.500" strokeDasharray="1.500 1" /><path d="M5 9.500h13" stroke="#fff" strokeWidth="1.200" /></Svg>
        </button>
        <div className="ml-[13px] w-[62px] whitespace-nowrap pb-[2px] text-center text-[12px] leading-[17px]">
          <p>1:07 PM</p>
          <p>25/05/2019</p>
        </div>
        <span className="ml-[9px] mr-1 h-full w-px bg-[#555]" />
      </div>
    </footer>
  );
}

export default function App() {
  return (
    <div className={`flex h-screen flex-col overflow-hidden bg-[#217346] ${UI}`}>
      <TitleBar />
      <RibbonTabs />
      <Ribbon />
      <FormulaBar />
      <main className="relative flex min-h-0 flex-1 bg-[#e6e6e6]">
        <Sheet />
        <VerticalScroll />
        <ErrorDialog />
      </main>
      <SheetTabs />
      <StatusBar />
      <Taskbar />
    </div>
  );
}
